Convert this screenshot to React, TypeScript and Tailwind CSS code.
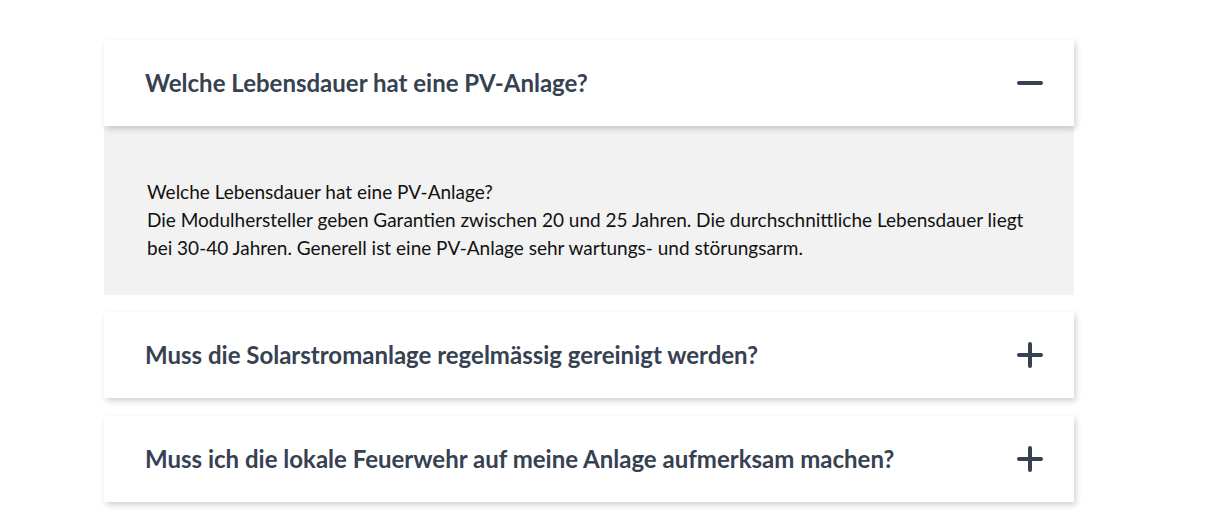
import React from "react";

function Minus() {
  return (
    <svg width="26" height="26" viewBox="0 0 26 26" className="shrink-0">
      <line x1="2" y1="13" x2="24" y2="13" stroke="#364151" strokeWidth="4" strokeLinecap="round" />
    </svg>
  );
}

function Plus() {
  return (
    <svg width="26" height="26" viewBox="0 0 26 26" className="shrink-0">
      <line x1="2" y1="13" x2="24" y2="13" stroke="#364151" strokeWidth="4" strokeLinecap="round" />
      <line x1="13" y1="2" x2="13" y2="24" stroke="#364151" strokeWidth="4" strokeLinecap="round" />
    </svg>
  );
}

function Header({ title, open }: { title: string; open: boolean }) {
  return (
    <div className="relative z-10 bg-white h-[86px] flex items-center justify-between pl-[41px] pr-[31px] shadow-[2px_3px_6px_rgba(0,0,0,0.18)]">
      <h3 className="text-[24px] font-bold text-[#364151] leading-none" style={{ fontFamily: "Lato, sans-serif" }}>
        {title}
      </h3>
      {open ? <Minus /> : <Plus />}
    </div>
  );
}

export default function App() {
  return (
    <div className="bg-white w-[1216px] h-[518px] pt-[40px]" style={{ fontFamily: "Lato, sans-serif" }}>
      <div className="ml-[104px] w-[970px] flex flex-col">
        <div>
          <Header title="Welche Lebensdauer hat eine PV-Anlage?" open />
          <div className="bg-[#f2f2f2] pl-[43px] pr-[40px] pt-[52px] pb-[33px] text-[19px] leading-[28px] text-[#111]">
            <p>Welche Lebensdauer hat eine PV-Anlage?</p>
            <p>
              Die Modulhersteller geben Garantien zwischen 20 und 25 Jahren. Die durchschnittliche Lebensdauer liegt bei 30-40 Jahren. Generell ist eine PV-Anlage sehr wartungs- und störungsarm.
            </p>
          </div>
        </div>
        <div className="mt-[17px]">
          <Header title="Muss die Solarstromanlage regelmässig gereinigt werden?" open={false} />
        </div>
        <div className="mt-[18px]">
          <Header title="Muss ich die lokale Feuerwehr auf meine Anlage aufmerksam machen?" open={false} />
        </div>
      </div>
    </div>
  );
}
